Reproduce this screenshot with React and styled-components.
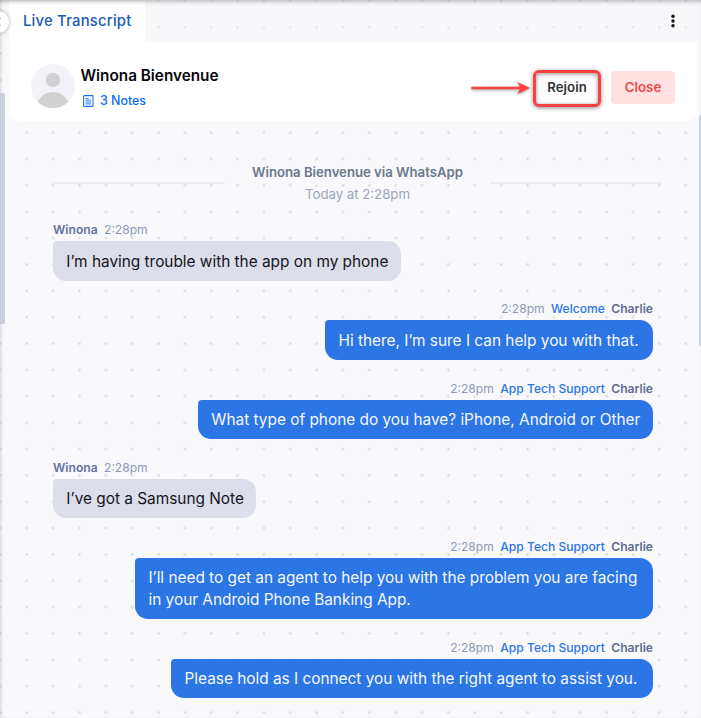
import React from "react";
import styled, { createGlobalStyle } from "styled-components";

const GlobalStyle = createGlobalStyle`
  * { box-sizing: border-box; }
  body { margin: 0; font-family: Inter, sans-serif; background: #f9f9fc; }
`;

const Page = styled.main`
  position: relative;
  width: 701px;
  height: 718px;
  overflow: hidden;
  background-color: #f9f9fc;
  background-image: radial-gradient(circle at center, #dcdde0 0, #dcdde0 0.8px, transparent 1.9px);
  background-size: 26.37px 26.37px;
  background-position: -12.85px -12.3px;
`;

const TopBar = styled.header`
  display: flex;
  justify-content: space-between;
  height: 42px;
  padding: 0 19px 0 9px;
  background: rgba(246, 247, 250, 0.35);
`;

const Tab = styled.div`
  width: 136.4px;
  padding: 1px 0 0 14px;
  background: #fff;
  color: #205bb5;
  font-size: 14.8px;
  font-weight: 500;
  line-height: 40px;
  white-space: nowrap;
  letter-spacing: 0.23px;
`;

const MenuButton = styled.button`
  display: flex;
  align-items: center;
  justify-content: center;
  width: 18px;
  height: 41px;
  padding: 0;
  border: 0;
  background: transparent;
`;

const ContactCard = styled.section`
  display: flex;
  align-items: center;
  height: 78.5px;
  margin: 0 4px 0 9px;
  padding: 10px 22px 0;
  border-radius: 0 0 10px 10px;
  background: #fff;
`;

const Contact = styled.div`
  display: flex;
  flex-direction: column;
  flex: 1;
  margin-left: 5.5px;
  padding-top: 4px;
`;

const ContactName = styled.h1`
  margin: 0;
  color: #08080c;
  font-size: 15.3px;
  font-weight: 600;
  line-height: 25px;
`;

const Notes = styled.a`
  display: flex;
  align-items: center;
  gap: 6.5px;
  height: 25px;
  padding-left: 2px;
  color: #0b6cf5;
  font-size: 12.4px;
  font-weight: 500;
`;

const Actions = styled.div`
  display: flex;
  align-items: center;
  gap: 10px;
  padding-top: 1px;
`;

const ActionButton = styled.button`
  width: ${(p) => (p.$danger ? 64 : 68)}px;
  height: ${(p) => (p.$danger ? 33 : 37)}px;
  margin-top: ${(p) => (p.$danger ? 1 : 3)}px;
  padding: 0 0 ${(p) => (p.$danger ? 1 : 3)}px;
  border: ${(p) => (p.$danger ? "0" : "3px solid #f9413f")};
  border-radius: ${(p) => (p.$danger ? 4 : 6)}px;
  background: ${(p) => (p.$danger ? "#ffe1e1" : "#fff")};
  box-shadow: ${(p) => (p.$danger ? "none" : "0 1px 4px rgba(0,0,0,.45), inset 0 1px 4px rgba(0,0,0,.45)")};
  color: ${(p) => (p.$danger ? "#f24848" : "#303338")};
  font: 600 13.2px Inter, sans-serif;
  letter-spacing: 0.05px;
`;

const Arrow = styled.svg`
  margin: 2px -6px 0 0;
  overflow: visible;
  filter: drop-shadow(0 1px 1.5px rgba(0, 0, 0, 0.4));
`;

const SessionHeading = styled.section`
  display: grid;
  grid-template-columns: 172px 1fr 172px;
  align-items: center;
  height: 44px;
  margin: 40.5px 39px 0 53px;
  text-align: center;
`;

const Rule = styled.div`
  height: 2px;
  background: #eceef3;
`;

const SessionTitle = styled.div`
  color: #6b788e;
  font-size: 13.2px;
  font-weight: 600;
  line-height: 22px;
  letter-spacing: -0.02px;
`;

const SessionTime = styled.div`
  color: #9aa6b8;
  font-size: 13.2px;
  line-height: 22px;
`;

const Conversation = styled.section`
  display: flex;
  flex-direction: column;
  gap: 18.65px;
  padding: 15.3px 48px 0 53px;
`;

const Message = styled.article`
  display: flex;
  flex-direction: column;
  align-items: ${(p) => (p.$outgoing ? "flex-end" : "flex-start")};
`;

const Meta = styled.div`
  display: flex;
  gap: 6.4px;
  height: 21px;
  font-size: 12.1px;
  line-height: 20.6px;
`;

const Sender = styled.span`
  color: ${(p) => (p.$outgoing ? "#606b91" : "#6472a0")};
  font-weight: 600;
`;

const Time = styled.time`
  color: #8d98b7;
`;

const Flow = styled.span`
  color: #2b75e5;
  font-weight: 500;
`;

const Bubble = styled.div`
  width: ${(p) => p.$width}px;
  padding: 9.5px 0 8.1px 13.3px;
  border-radius: 4px 13px 13px 13px;
  background: ${(p) => (p.$outgoing ? "#2b75e5" : "#dcdee9")};
  color: ${(p) => (p.$outgoing ? "#f5f8ff" : "#141522")};
  font-size: 15.4px;
  line-height: 21.9px;
  letter-spacing: -0.01px;
  white-space: pre;
`;

const EdgeShade = styled.div`
  position: absolute;
  inset: 0;
  pointer-events: none;
  box-shadow: inset 0 4px 5px -3px rgba(0, 0, 0, 0.32), inset 3px 0 4px -2px rgba(0, 0, 0, 0.12);
`;

const ScrollThumb = styled.div`
  position: absolute;
  top: ${(p) => p.$top}px;
  ${(p) => p.$side}: 0;
  width: ${(p) => p.$width}px;
  height: 231px;
  border-radius: ${(p) => (p.$side === "left" ? "0 2px 2px 0" : "2px 0 0 2px")};
  background: #c8d0de;
`;

const CollapseButton = styled.button`
  position: absolute;
  top: 10.5px;
  left: -13px;
  display: flex;
  align-items: center;
  justify-content: flex-end;
  width: 22px;
  height: 22px;
  padding: 0 8px 0 0;
  border: 0;
  border-radius: 50%;
  background: #fff;
  box-shadow: 0 0 4px rgba(0, 0, 0, 0.32);
`;

const messages = [
  { text: "I’m having trouble with the app on my phone", width: 348 },
  { text: "Hi there, I’m sure I can help you with that.", flow: "Welcome", width: 327.8 },
  { text: "What type of phone do you have? iPhone, Android or Other", flow: "App Tech Support", width: 455 },
  { text: "I’ve got a Samsung Note", width: 203 },
  { text: "I’ll need to get an agent to help you with the problem you are facing\nin your Android Phone Banking App.", flow: "App Tech Support", width: 517.8 },
  { text: "Please hold as I connect you with the right agent to assist you.", flow: "App Tech Support", width: 481.8 },
];

function Avatar() {
  return (
    <svg width="44" height="44" viewBox="0 0 44 44">
      <circle cx="22" cy="22" r="22" fill="#f2f3f8" />
      <circle cx="22" cy="16" r="7.2" fill="#d1d1d1" />
      <path d="M6.8 38C9.8 31.7 15.3 28 22 28S34.2 31.7 37.2 38A22 22 0 0 1 6.8 38Z" fill="#d1d1d1" />
    </svg>
  );
}

function NoteIcon() {
  return (
    <svg width="11" height="12" viewBox="0 0 11 12" fill="none" stroke="#1673f5">
      <rect x=".6" y=".6" width="9.4" height="10.8" rx=".6" strokeWidth="1.1" />
      <path d="M2.5 3.4h3.2M2.5 5.1h5.6M2.5 7h5.6M2.5 8.9h5.6" strokeWidth=".9" />
    </svg>
  );
}

export default function App() {
  return (
    <>
      <GlobalStyle />
      <Page>
        <TopBar>
          <Tab>Live Transcript</Tab>
          <MenuButton aria-label="More options">
            <svg width="4" height="14" viewBox="0 0 4 14" fill="#111">
              <circle cx="2" cy="2.3" r="1.7" /><circle cx="2" cy="7" r="1.7" /><circle cx="2" cy="11.7" r="1.7" />
            </svg>
          </MenuButton>
        </TopBar>
        <ContactCard>
          <Avatar />
          <Contact>
            <ContactName>Winona Bienvenue</ContactName>
            <Notes><NoteIcon />3 Notes</Notes>
          </Contact>
          <Actions>
            <Arrow width="58" height="12" viewBox="0 0 58 12">
              <path d="M1.5 6H50" stroke="#f9413f" strokeWidth="2.7" strokeLinecap="round" />
              <path d="M46.5 0L59 6L46.5 12L49.5 6Z" fill="#f9413f" />
            </Arrow>
            <ActionButton>Rejoin</ActionButton>
            <ActionButton $danger>Close</ActionButton>
          </Actions>
        </ContactCard>
        <SessionHeading>
          <Rule />
          <div>
            <SessionTitle>Winona Bienvenue via WhatsApp</SessionTitle>
            <SessionTime>Today at 2:28pm</SessionTime>
          </div>
          <Rule />
        </SessionHeading>
        <Conversation>
          {messages.map(({ text, flow, width }) => {
            const outgoing = Boolean(flow);
            return (
              <Message key={text} $outgoing={outgoing}>
                <Meta>
                  {!outgoing && <Sender>Winona</Sender>}
                  <Time>2:28pm</Time>
                  {outgoing && <Flow>{flow}</Flow>}
                  {outgoing && <Sender $outgoing>Charlie</Sender>}
                </Meta>
                <Bubble $outgoing={outgoing} $width={width}>{text}</Bubble>
              </Message>
            );
          })}
        </Conversation>
        <EdgeShade />
        <ScrollThumb $side="left" $top={93} $width={5} />
        <ScrollThumb $side="right" $top={115} $width={2} />
        <CollapseButton aria-label="Collapse">
          <svg width="5" height="10" viewBox="0 0 5 10" fill="none" stroke="#a2a4a9" strokeWidth="1.2"><path d="M4.5 1L1 5L4.5 9" /></svg>
        </CollapseButton>
      </Page>
    </>
  );
}
